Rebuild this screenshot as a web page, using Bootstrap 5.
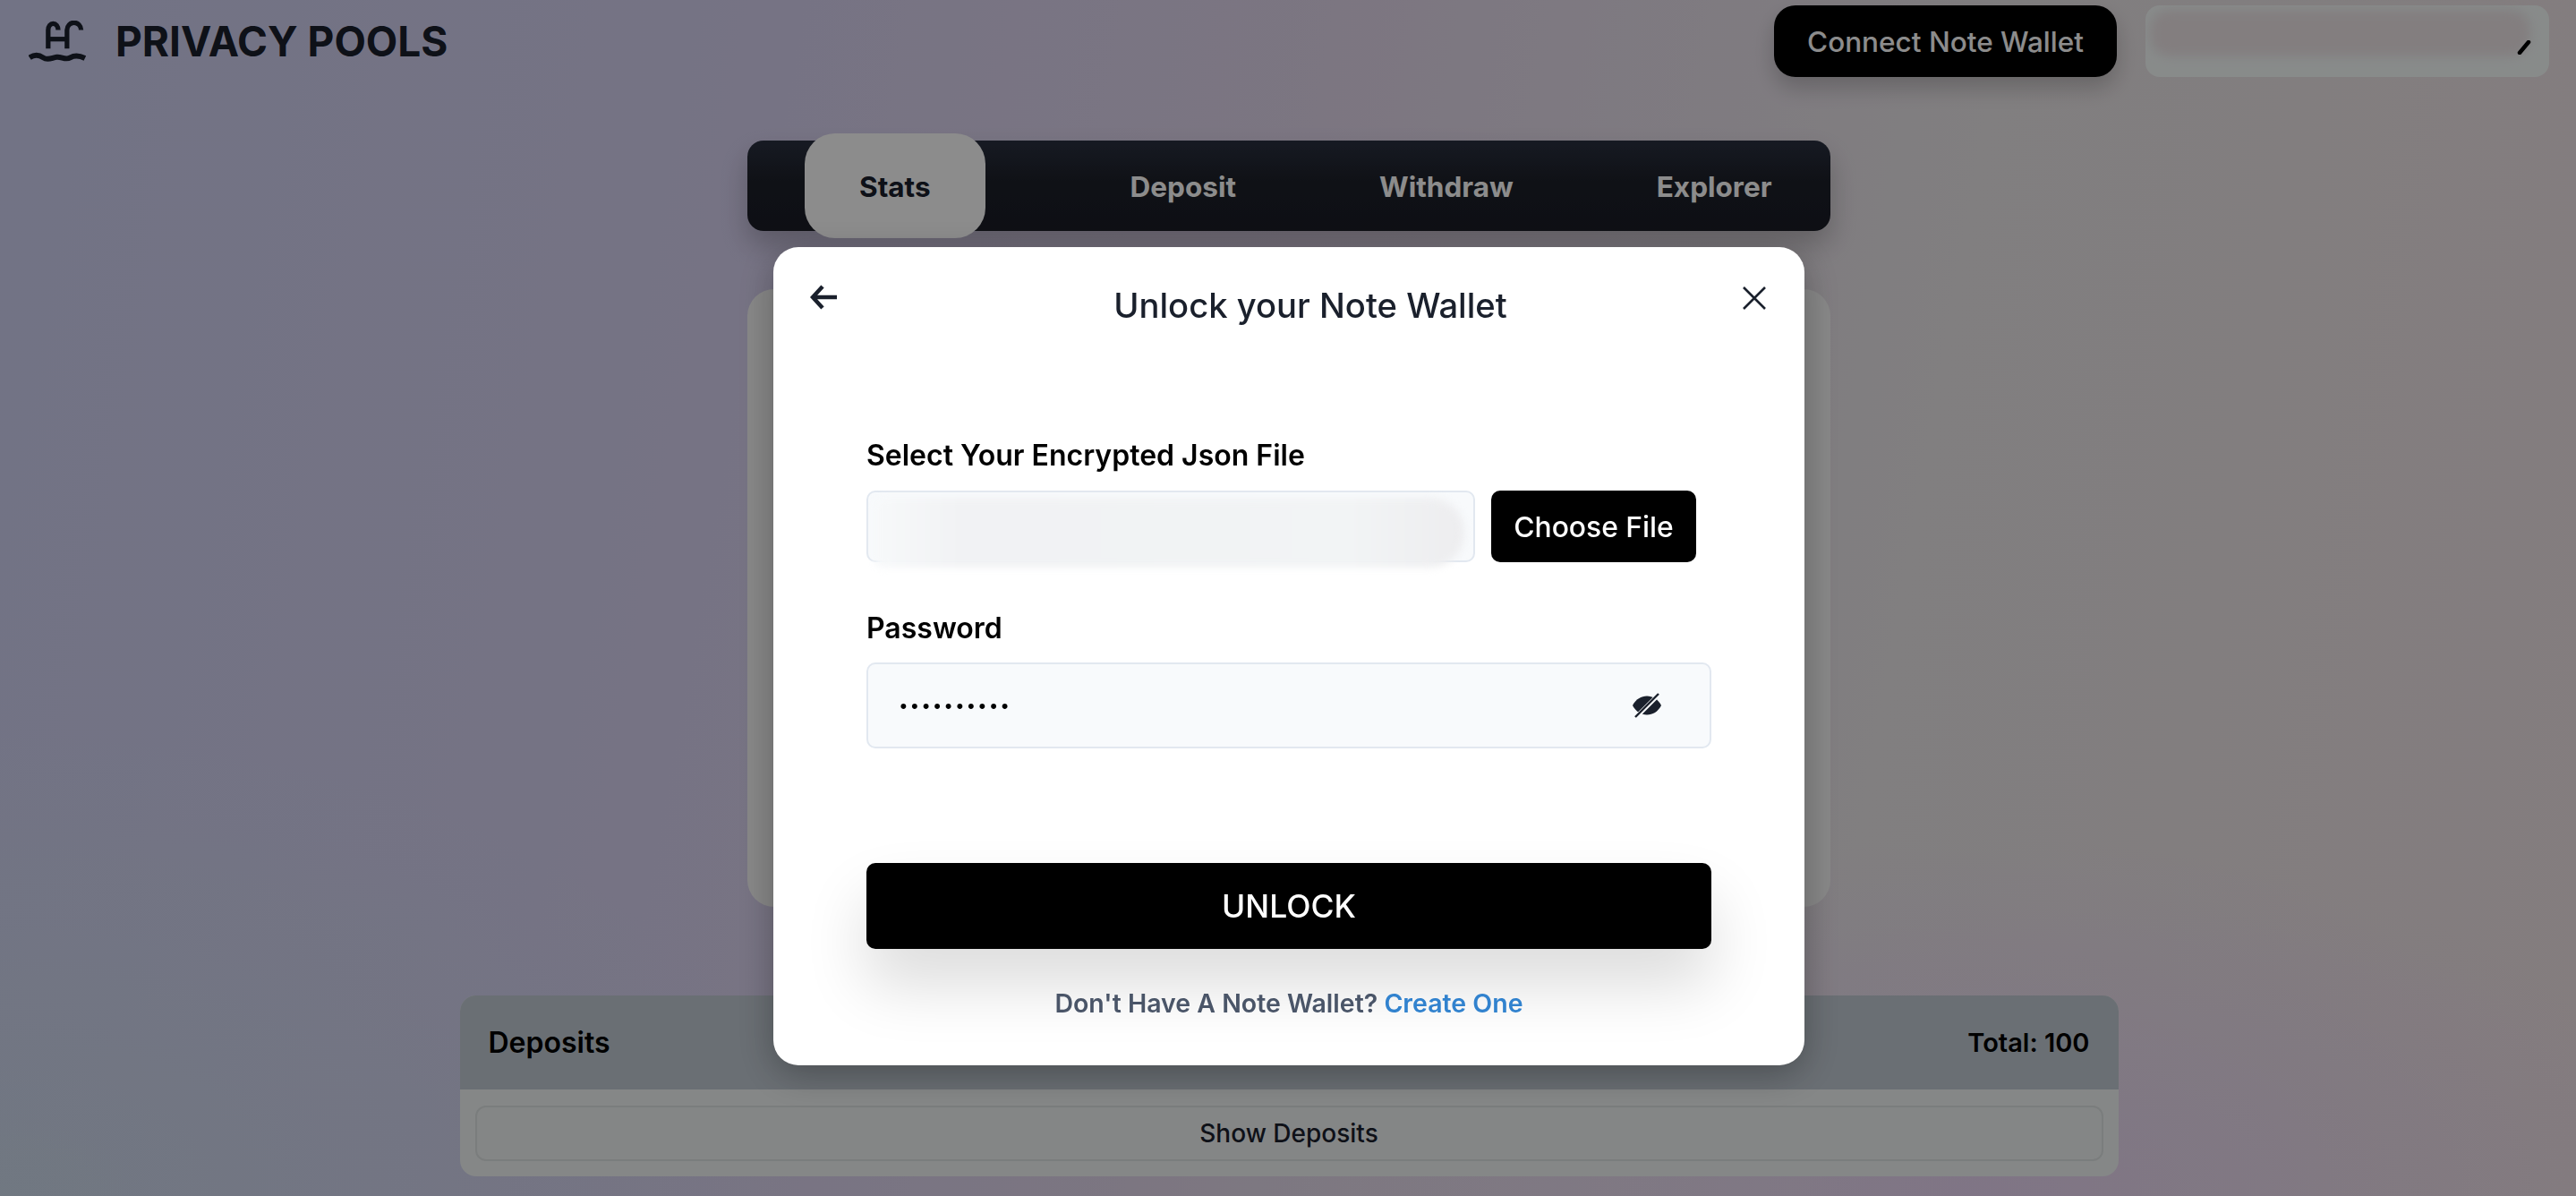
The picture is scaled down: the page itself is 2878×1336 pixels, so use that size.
<!DOCTYPE html>
<html lang="en">
<head>
    <meta charset="UTF-8">
    <meta name="viewport" content="width=device-width, initial-scale=1.0">
    <title>Privacy Pools</title>
    <link href="https://cdn.jsdelivr.net/npm/bootstrap@5.3.0/dist/css/bootstrap.min.css" rel="stylesheet">
    <script src="https://cdn.jsdelivr.net/npm/bootstrap@5.3.0/dist/js/bootstrap.bundle.min.js"></script>
    <style>
        html, body {
            height: 1336px;
            overflow: hidden;
        }
        body {
            padding-left: 2px;
            font-family: Inter, "Liberation Sans", sans-serif;
            color: #1a202c;
            background:
                radial-gradient(800px 400px at 2200px 1336px, rgba(231,206,248,.7), rgba(231,206,248,0)),
                radial-gradient(900px 520px at 0 1336px, rgba(204,222,234,.7), rgba(204,222,234,0)),
                linear-gradient(100deg, #cfd2f2 0%, #d6d1f1 25%, #e2d7ec 48%, #ebe7e9 72%, #f0e3e6 100%);
        }
        .top-bar {
            padding: 6px 30px 0 30px;
        }
        .brand-name {
            font-size: 46px;
            font-weight: 700;
            line-height: 1;
            margin-left: 33px;
        }
        .connect-btn {
            width: 383px;
            height: 80px;
            padding: 2px 0 0;
            background: #000;
            color: #fff;
            border: 0;
            border-radius: 24px;
            font-size: 31.5px;
            font-weight: 500;
            box-shadow: 0 12px 24px rgba(0,0,0,.2);
        }
        .wallet-box {
            width: 451px;
            height: 80px;
            margin-left: 32px;
            background: #f8fdfc;
            border-radius: 16px;
        }
        .wallet-blur {
            position: absolute;
            left: 5px;
            top: 5px;
            width: 425px;
            height: 52px;
            border-radius: 22px;
            background: #eee6e8;
            filter: blur(6px);
        }
        .wallet-pen {
            position: absolute;
            right: 20px;
            top: 39px;
        }
        .tab-bar {
            width: 1210px;
            height: 101px;
            margin: 71px auto 0;
            padding: 2px 64px 0;
            gap: 160px;
            border-radius: 18px;
            background: linear-gradient(180deg, #2a3040 0%, #1d2029 45%, #1a1c26 100%);
            box-shadow: 0 16px 30px rgba(0,0,0,.22);
            font-size: 31.5px;
            font-weight: 700;
            color: #fff;
        }
        .tab-active {
            height: 117px;
            margin: -10px 2px -8px 0;
            padding: 2px 61px 0;
            border-radius: 34px;
            background: #fff;
            color: #1a202c;
        }
        .stats-panel {
            width: 1210px;
            height: 690px;
            margin: 65px auto 0;
            border: 0;
            border-radius: 30px;
            background: #f8f8f8;
        }
        .deposits-panel {
            width: 1853px;
            margin: 99px auto 0;
            border: 0;
            border-radius: 18px;
            overflow: hidden;
            background: #f2f6f6;
        }
        .deposits-head {
            height: 105px;
            padding: 0 32px;
            border: 0;
            border-radius: 0 !important;
            background: #c1cad3;
            color: #000;
            font-size: 32px;
            font-weight: 600;
        }
        .deposits-total {
            font-size: 29px;
        }
        .deposits-body {
            padding: 18px 17px 17px;
        }
        .show-btn {
            height: 62px;
            width: 100%;
            padding: 0;
            border: 2px solid #dfe3e3;
            border-radius: 12px;
            background: #f1f5f5;
            color: #1a202c;
            font-size: 28px;
            font-weight: 500;
        }
        .modal-scrim {
            position: fixed;
            inset: 0;
            padding: 276px 0 0 2px;
            background: rgba(0,0,0,.45);
        }
        .unlock-modal {
            width: 1152px;
            height: 914px;
            margin: 0 auto;
            border-radius: 28px;
            background: #fff;
            box-shadow: 0 10px 40px rgba(0,0,0,.3);
        }
        .unlock-head {
            padding: 40px 43px 0 41px;
        }
        .back-arrow {
            margin-top: 2px;
        }
        .close-x {
            margin-top: 4px;
        }
        .unlock-title {
            height: 48px;
            padding-left: 46px;
            font-size: 38.2px;
            font-weight: 500;
            line-height: 50px;
            color: #1a202c;
            text-align: center;
        }
        .unlock-form {
            padding: 126px 104px 0;
        }
        .field-label {
            display: block;
            margin-bottom: 20px;
            font-size: 32px;
            font-weight: 600;
            line-height: 38px;
            color: #000;
        }
        .file-box {
            width: 680px;
            height: 80px;
            background: #f8fafc;
            border: 2px solid #e2e8f0;
            border-radius: 10px;
        }
        .file-blur {
            position: absolute;
            left: 6px;
            top: 6px;
            width: 660px;
            height: 78px;
            border-radius: 10px 38px 38px 10px;
            background: linear-gradient(90deg, #f7f9fa 0%, #f1f2f4 15%, #f2f4f5 80%, #ededef 100%);
            filter: blur(4px);
        }
        .choose-btn {
            width: 229px;
            height: 80px;
            margin-left: 18px;
            padding: 2px 0 0;
            border: 0;
            border-radius: 10px;
            background: #000;
            color: #fff;
            font-size: 31.8px;
            font-weight: 500;
        }
        .pass-row {
            margin-top: 55px;
        }
        .pass-row .field-label {
            margin-bottom: 19px;
        }
        .pass-box {
            width: 944px;
            height: 96px;
            padding: 0 53px 0 34px;
            background: #f8fafc;
            border: 2px solid #e2e8f0;
            border-radius: 10px;
        }
        .pass-input {
            padding: 2px 0 0;
            border: 0;
            background: transparent;
            font-size: 19px;
            letter-spacing: 1.9px;
            color: #000;
        }
        .pass-input:focus {
            background: transparent;
            box-shadow: none;
        }
        .unlock-btn {
            display: block;
            width: 944px;
            height: 96px;
            margin-top: 128px;
            padding: 2px 0 0;
            border: 0;
            border-radius: 10px;
            background: #000;
            color: #fff;
            font-size: 35.5px;
            font-weight: 500;
            box-shadow: 0 40px 70px rgba(0,0,0,.14);
        }
        .unlock-foot {
            position: relative;
            margin-top: 43px;
            font-size: 28.5px;
            font-weight: 600;
            line-height: 36px;
            color: #4a5568;
            text-align: center;
        }
        .unlock-foot a {
            color: #3182ce;
            text-decoration: none;
        }
    </style>
</head>
<body>
    <!-- page behind the dialog -->
    <div class="top-bar d-flex align-items-center justify-content-between">
        <div class="d-flex align-items-center">
            <svg width="64" height="46" viewBox="36 40 192 140" fill="none" stroke="#1a202c" stroke-width="16">
                <path d="M101 135V72a17 22 0 0 1 34 0"/>
                <path d="M165 135V72a23 24 0 0 1 48 0"/>
                <path d="M101 103H165"/>
                <path d="M38 166c16-11 30-11 46 0s30 0 46-2 30 11 46 2 30-8 50 2" stroke-width="18"/>
            </svg>
            <span class="brand-name">PRIVACY POOLS</span>
        </div>
        <div class="d-flex">
            <button type="button" class="btn connect-btn">Connect Note Wallet</button>
            <div class="wallet-box position-relative">
                <div class="wallet-blur"></div>
                <svg class="wallet-pen" width="16" height="16" viewBox="0 0 16 16"><path d="M3 14L13 2" stroke="#000" stroke-width="4.5" stroke-linecap="round"/></svg>
            </div>
        </div>
    </div>

    <div class="tab-bar d-flex align-items-center">
        <div class="tab-active d-flex align-items-center">Stats</div>
        <div>Deposit</div>
        <div>Withdraw</div>
        <div>Explorer</div>
    </div>

    <div class="card stats-panel"></div>

    <div class="card deposits-panel">
        <div class="card-header deposits-head d-flex align-items-center justify-content-between">
            <span>Deposits</span>
            <span class="deposits-total">Total: 100</span>
        </div>
        <div class="card-body deposits-body">
            <button type="button" class="btn show-btn">Show Deposits</button>
        </div>
    </div>

    <!-- dialog -->
    <div class="modal-scrim">
        <div class="unlock-modal">
            <div class="unlock-head d-flex align-items-start justify-content-between">
                <svg class="back-arrow" width="30" height="28" viewBox="0 0 30 28" fill="none" stroke="#1a202c" stroke-width="4.5">
                    <path d="M14 2L3 14L14 26M3 14H30"/>
                </svg>
                <div class="unlock-title flex-grow-1">Unlock your Note Wallet</div>
                <svg class="close-x" width="26" height="26" viewBox="0 0 26 26" fill="none" stroke="#1a202c" stroke-width="2.6">
                    <path d="M1 1L25 25M25 1L1 25"/>
                </svg>
            </div>
            <div class="unlock-form">
                <label class="field-label">Select Your Encrypted Json File</label>
                <div class="d-flex">
                    <div class="file-box position-relative">
                        <div class="file-blur"></div>
                    </div>
                    <button type="button" class="btn choose-btn">Choose File</button>
                </div>
                <div class="pass-row">
                    <label class="field-label" for="walletPass">Password</label>
                    <div class="pass-box d-flex align-items-center">
                        <input id="walletPass" class="form-control pass-input" type="password" value="walletpass">
                        <svg class="flex-shrink-0" width="34" height="28" viewBox="0 0 34 28">
                            <path d="M1 14C8 0 26 0 33 14C26 28 8 28 1 14Z" fill="#1a202c"/>
                            <path d="M6 26L30 2" stroke="#f8fafc" stroke-width="5"/>
                            <path d="M4 27L30 1" stroke="#1a202c" stroke-width="2.4"/>
                        </svg>
                    </div>
                </div>
                <button type="button" class="btn unlock-btn">UNLOCK</button>
                <div class="unlock-foot">Don't Have A Note Wallet? <a href="#">Create One</a></div>
            </div>
        </div>
    </div>
</body>
</html>
